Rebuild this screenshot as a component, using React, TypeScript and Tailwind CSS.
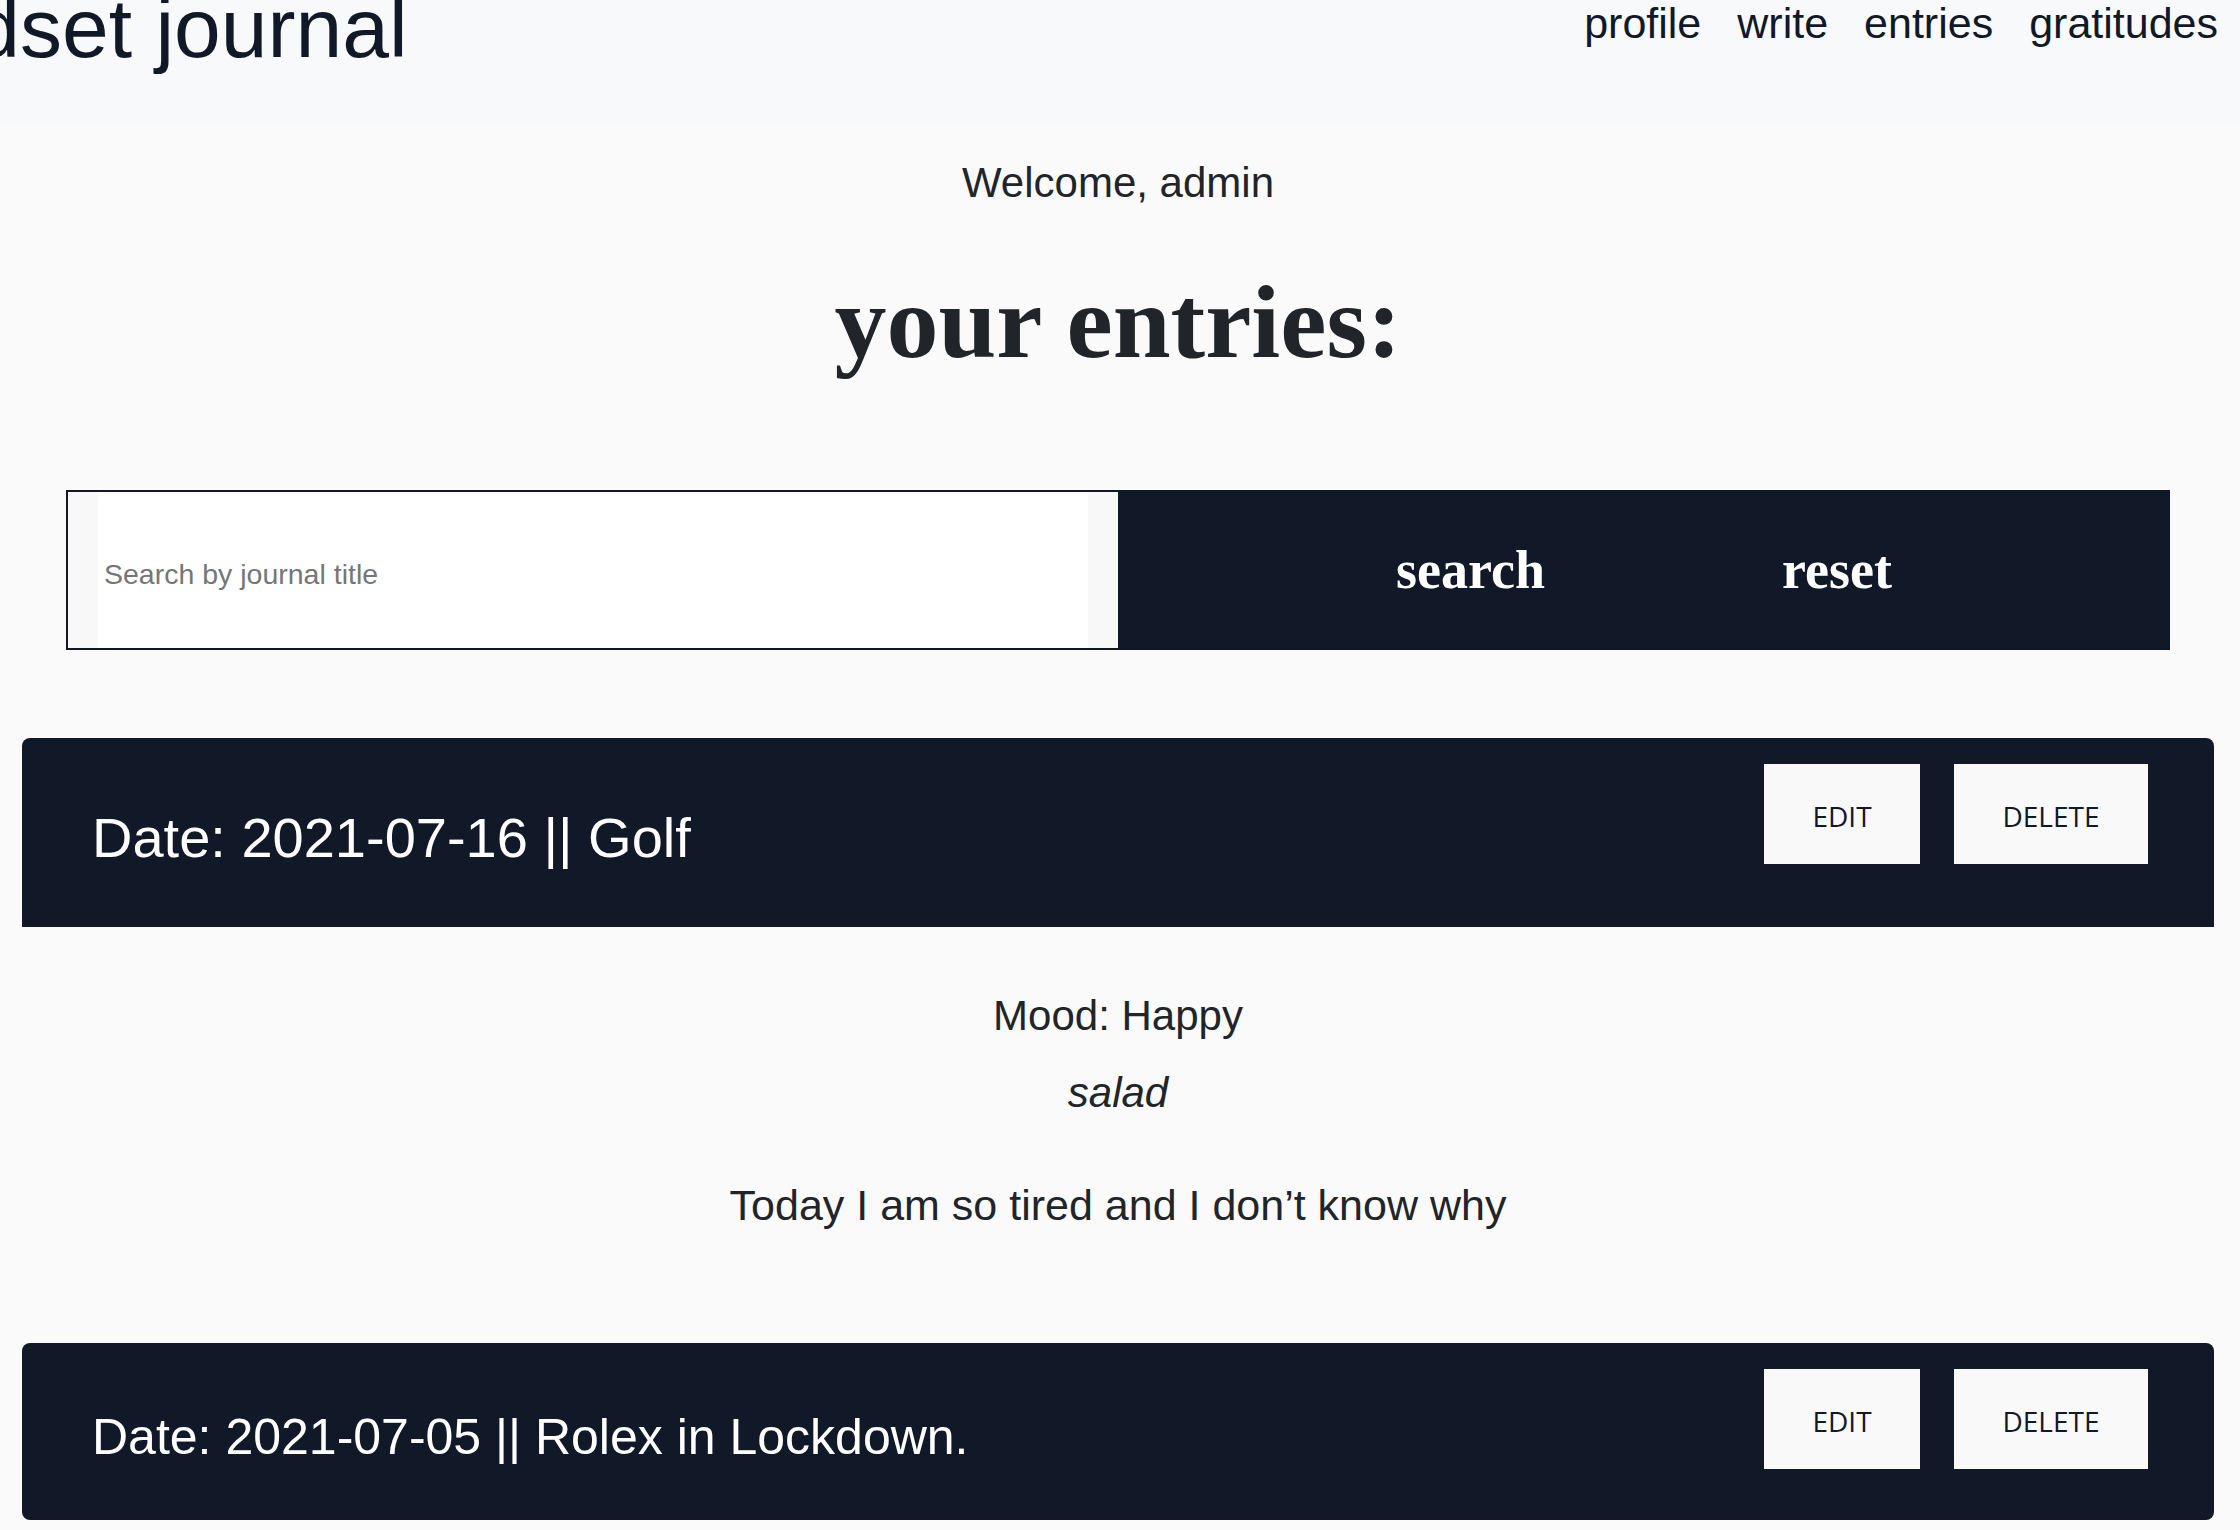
import React from "react";

type Entry = {
  date: string;
  title: string;
  titleSize: "lg" | "md";
  mood?: string;
  tag?: string;
  body?: string;
};

const links = ["profile", "write", "entries", "gratitudes"];

const entries: Entry[] = [
  {
    date: "2021-07-16",
    title: "Golf",
    titleSize: "lg",
    mood: "Happy",
    tag: "salad",
    body: "Today I am so tired and I don’t know why",
  },
  { date: "2021-07-05", title: "Rolex in Lockdown.", titleSize: "md" },
];

function EntryCard({ entry }: { entry: Entry }) {
  const open = Boolean(entry.body);
  return (
    <div>
      <div
        className={
          open
            ? "flex h-[189px] items-start justify-between rounded-t-lg bg-[#111827] pl-[70px] pr-[66px] pt-[26px]"
            : "flex h-[177px] items-start justify-between rounded-lg bg-[#111827] pl-[70px] pr-[66px] pt-[26px]"
        }
      >
        <h3
          className={
            entry.titleSize === "lg"
              ? "mt-[46px] text-[56px] leading-none text-white"
              : "mt-[43px] text-[50px] leading-none text-white"
          }
        >
          Date: {entry.date} || {entry.title}
        </h3>
        <div className="flex gap-[34px] font-['Open_Sans',sans-serif] text-[28px] text-[#111827]">
          <button type="button" className="h-[100px] w-[156px] bg-[#f9f9f9] pt-[4px]">
            EDIT
          </button>
          <button type="button" className="h-[100px] w-[194px] bg-[#f9f9f9] pt-[4px]">
            DELETE
          </button>
        </div>
      </div>
      {open && (
        <div className="flex flex-col items-center text-[42px] leading-none text-[#212529]">
          <p className="mt-[68px]">Mood: {entry.mood}</p>
          <p className="mt-[35px] italic">{entry.tag}</p>
          <p className="mt-[70px] text-[43px]">{entry.body}</p>
        </div>
      )}
    </div>
  );
}

export default function App() {
  return (
    <div className="min-h-screen w-full overflow-hidden bg-[#fafafa] font-['Liberation_Sans',Arial,sans-serif] text-[#212529]">
      <header className="flex h-[126px] items-start justify-between bg-[#f8f9fa] text-[#111827]">
        <h1 className="ml-[-162px] mt-[-14px] shrink-0 whitespace-nowrap text-[84px] leading-none">
          mindset journal
        </h1>
        <nav className="mt-[2px] flex gap-[36px] pr-[22px] text-[43px] leading-none">
          {links.map((l) => (
            <a key={l} href="#">
              {l}
            </a>
          ))}
        </nav>
      </header>

      <main className="w-[2236px] pb-[40px]">
        <p className="mt-[36px] text-center text-[42px] leading-none">Welcome, admin</p>
        <h2 className="mt-[66px] text-center font-['Liberation_Serif',serif] text-[104px] font-bold leading-none">
          your entries:
        </h2>

        <form className="mx-[66px] mt-[116px] grid h-[160px] grid-cols-2" onSubmit={(e) => e.preventDefault()}>
          <div className="flex border-2 border-r-0 border-[#111827] bg-[#f8f8f8] px-[30px]">
            <input
              type="text"
              placeholder="Search by journal title"
              className="h-full w-full bg-white pl-[6px] pt-[8px] text-[28.5px] outline-none placeholder:text-[#767676]"
            />
          </div>
          <div className="flex items-center justify-center gap-[237px] bg-[#111827] font-['Liberation_Serif',serif] text-[54px] font-bold leading-none text-white">
            <button type="submit">search</button>
            <button type="button">reset</button>
          </div>
        </form>

        <div className="mx-[22px] mt-[88px] flex flex-col gap-[116px]">
          {entries.map((e) => (
            <EntryCard key={e.date} entry={e} />
          ))}
        </div>
      </main>
    </div>
  );
}
